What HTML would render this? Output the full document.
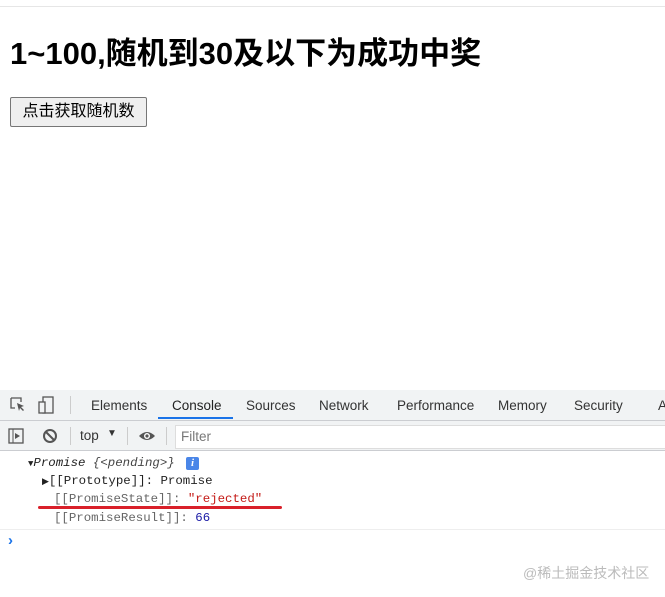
<!DOCTYPE html>
<html><head><meta charset="utf-8"><style>
body{margin:0;width:665px;height:597px;background:#fff;position:relative;overflow:hidden;font-family:"Liberation Sans","Noto Sans CJK SC",sans-serif}
.abs{position:absolute}
h1{position:absolute;left:10px;top:34px;margin:0;font-size:31px;font-weight:bold;line-height:40px;white-space:nowrap}
.btn{left:10px;top:97px;width:135px;height:28px;border:1px solid #767676;border-radius:2px;background:#efefef;font-size:16px;line-height:28px;text-align:center}
.tabs{left:0;top:390px;width:665px;height:30px;background:#f1f3f4;border-bottom:1px solid #cbcdd1;font-size:13.5px;color:#333}
.tabs span{position:absolute;top:8px}
.tb{left:0;top:421px;width:665px;height:29px;background:#f1f3f4;border-bottom:1px solid #cbcdd1;font-size:13.5px;color:#333}
.mono{font-family:"Liberation Mono",monospace;font-size:12.4px}
</style></head><body>
<div class="abs" style="left:0;top:6px;width:665px;height:1px;background:#e6e6e6"></div>
<h1>1~100,随机到30及以下为成功中奖</h1>
<div class="abs btn">点击获取随机数</div>
<div class="abs tabs">
<svg class="abs" style="left:10px;top:7px" width="16" height="16"><path d="M1 1h10v4M1 1v10h4" fill="none" stroke="#555" stroke-width="1.3"/><path d="M7 6l7 3-3 1 3 3-1 1-3-3-1 3z" fill="#555"/></svg>
<svg class="abs" style="left:38px;top:6px" width="18" height="18"><rect x="5" y="1" width="10" height="16" fill="none" stroke="#555" stroke-width="1.3"/><rect x="1" y="6" width="6" height="11" fill="#f1f3f4" stroke="#555" stroke-width="1.3"/></svg>
<div class="abs" style="left:70px;top:6px;width:1px;height:18px;background:#ccc"></div>
<span style="left:91px">Elements</span>
<span style="left:172px;color:#222">Console</span>
<div class="abs" style="left:158px;top:27px;width:75px;height:2px;background:#1a73e8"></div>
<span style="left:246px">Sources</span>
<span style="left:319px">Network</span>
<span style="left:397px">Performance</span>
<span style="left:498px">Memory</span>
<span style="left:574px">Security</span>
<span style="left:658px">A</span>
</div>
<div class="abs tb">
<svg class="abs" style="left:8px;top:7px" width="16" height="16"><rect x="1" y="1" width="14" height="14" fill="none" stroke="#555" stroke-width="1.3"/><path d="M5 1v14" stroke="#555"/><path d="M7 5l5 3-5 3z" fill="#555"/></svg>
<svg class="abs" style="left:42px;top:7px" width="16" height="16"><circle cx="8" cy="8" r="6" fill="none" stroke="#555" stroke-width="2"/><path d="M4 4l8 8" stroke="#555" stroke-width="2"/></svg>
<div class="abs" style="left:70px;top:6px;width:1px;height:18px;background:#ccc"></div>
<span class="abs" style="left:80px;top:7px">top</span>
<span class="abs" style="left:107px;top:7px;font-size:10px">▼</span>
<div class="abs" style="left:127px;top:6px;width:1px;height:18px;background:#ccc"></div>
<svg class="abs" style="left:138px;top:7px" width="18" height="16"><path d="M1 8Q9 0 17 8Q9 16 1 8z" fill="#555"/><circle cx="9" cy="8" r="3" fill="#fff"/><circle cx="9" cy="8" r="1.6" fill="#555"/></svg>
<div class="abs" style="left:166px;top:6px;width:1px;height:18px;background:#ccc"></div>
<div class="abs" style="left:175px;top:4px;width:495px;height:22px;background:#fff;border:1px solid #ddd"></div>
<span class="abs" style="left:181px;top:8px;color:#777">Filter</span>
</div>
<div class="abs mono" style="left:28px;top:456px;color:#222"><span style="font-size:9px">▼</span><i>Promise</i> <i style="color:#444">{&lt;pending&gt;}</i></div>
<div class="abs" style="left:186px;top:457px;width:13px;height:13px;background:#4a86e8;border-radius:2px;color:#fff;font-size:11px;font-weight:bold;text-align:center;line-height:13px;font-family:'Liberation Serif',serif"><i>i</i></div>
<div class="abs mono" style="left:42px;top:474px;color:#222"><span style="font-size:9px">▶</span>[[Prototype]]: Promise</div>
<div class="abs mono" style="left:54px;top:492px;color:#666">[[PromiseState]]: <span style="color:#c41a16">"rejected"</span></div>
<div class="abs" style="left:38px;top:506px;width:244px;height:3px;background:#d9202a;border-radius:2px"></div>
<div class="abs mono" style="left:54px;top:511px;color:#666">[[PromiseResult]]: <span style="color:#1a1aa6">66</span></div>
<div class="abs" style="left:0;top:529px;width:665px;height:1px;background:#eee"></div>
<div class="abs" style="left:8px;top:532px;color:#1a73e8;font-size:15px;font-weight:bold">›</div>
<div class="abs" style="left:523px;top:563px;color:#bbb;font-size:14px">@稀土掘金技术社区</div>
</body></html>
